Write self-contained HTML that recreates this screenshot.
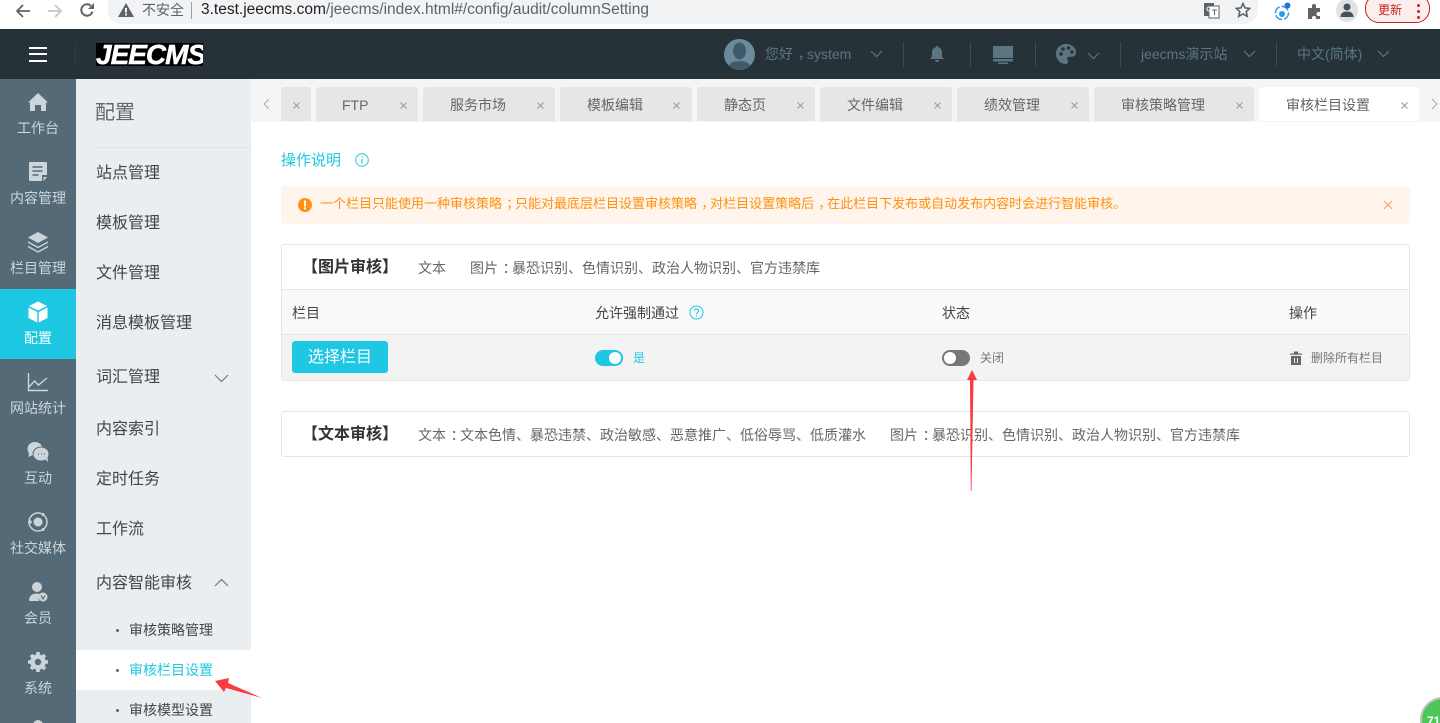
<!DOCTYPE html>
<html lang="zh">
<head>
<meta charset="utf-8">
<title>审核栏目设置</title>
<style>
html,body{margin:0;padding:0;background:#fff;width:1440px;height:723px;overflow:hidden}
body{font-family:"Liberation Sans","Noto Sans CJK SC",sans-serif;color:#333}
#root{position:absolute;left:0;top:0;width:1440px;height:723px;overflow:hidden;background:#fff}
#root div,#root span,#root svg{position:absolute;display:block}
i.p{font-style:normal;position:relative;left:.33em;top:0}
.t{white-space:nowrap;line-height:20px}
.tab{top:87px;height:34px;background:#e6e6e6;border-radius:3px 3px 0 0}
.tl{top:95px;font-size:14px;color:#666}
.x{top:101px;width:9px;height:9px}
.nl{left:0;width:76px;text-align:center;font-size:14px;color:#ccd5d9}
.sm{left:96px;font-size:16px;color:#444}
.sub{left:129px;font-size:14px;color:#444}
.dot{left:116px;width:3px;height:3px;border-radius:50%;background:#666}
.c{fill:#ccd5d9}
.h{font-size:14px;color:#5b7583}
.sep{top:42px;width:1px;height:25px;background:#3d4e57}
</style>
</head>
<body>
<div id="root">
<!-- browser bar -->
<div style="left:0;top:0;width:1440px;height:29px;background:#fff"></div>
<div style="left:108px;top:-4px;width:1150px;height:28px;background:#f1f3f4;border-radius:0 0 14px 14px"></div>
<svg style="left:14px;top:3px" width="18" height="16" viewBox="0 0 18 16"><path d="M16 8H3M9 2L3 8l6 6" fill="none" stroke="#5f6368" stroke-width="1.800"/></svg>
<svg style="left:46px;top:3px" width="18" height="16" viewBox="0 0 18 16"><path d="M2 8h13M9 2l6 6-6 6" fill="none" stroke="#c4c7ca" stroke-width="1.800"/></svg>
<svg style="left:79px;top:2px" width="16" height="16" viewBox="0 0 16 16"><path d="M13.500 9.500A5.700 5.700 0 1 1 11.800 3.700" fill="none" stroke="#5f6368" stroke-width="2"/><path d="M9 7h6V1z" fill="#5f6368"/></svg>
<svg style="left:118px;top:3px" width="16" height="14" viewBox="0 0 16 14"><path d="M8 0l8 14H0z" fill="#5f6368"/><rect x="7" y="5" width="2" height="4.500" fill="#f1f3f4"/><rect x="7" y="10.500" width="2" height="2" fill="#f1f3f4"/></svg>
<span class="t" style="left:142px;top:0;font-size:14px;color:#5f6368">不安全</span>
<div style="left:191px;top:2px;width:1px;height:17px;background:#9aa0a6"></div>
<span class="t" style="left:201px;top:0;font-size:15.500px;color:#5f6368"><i style="font-style:normal;color:#202124">3.test.jeecms.com</i>/jeecms/index.html#/config/audit/columnSetting</span>
<svg style="left:1203px;top:2px" width="17" height="17" viewBox="0 0 17 17"><rect x="1" y="1" width="10" height="13" fill="#5f6368"/><rect x="6" y="4" width="10" height="12" fill="#fff" stroke="#5f6368"/><circle cx="6" cy="7" r="2" fill="none" stroke="#fff"/><path d="M9 8h5M11.500 8v5" stroke="#5f6368"/></svg>
<svg style="left:1235px;top:2px" width="16" height="16" viewBox="0 0 16 16"><path d="M8 1.500l2 4.400 4.700.5-3.500 3.200 1 4.700L8 11.900l-4.200 2.400 1-4.700L1.300 6.400 6 5.900z" fill="none" stroke="#5f6368" stroke-width="1.600"/></svg>
<svg style="left:1274px;top:2px" width="18" height="20" viewBox="0 0 18 20"><circle cx="8" cy="11" r="6.500" fill="none" stroke="#2f97e8" stroke-width="1.500" stroke-dasharray="8 2"/><circle cx="8" cy="12" r="3" fill="#2f97e8"/><circle cx="13.500" cy="3.500" r="3" fill="#1a73e8"/></svg>
<svg style="left:1307px;top:3px" width="16" height="16" viewBox="0 0 16 16"><path d="M1 5h4V3a2 2 0 0 1 4 0v2h4v4h-1.500a2 2 0 0 0 0 4H13v3H9v-1a2 2 0 0 0-4 0v1H1z" fill="#5f6368"/></svg>
<div style="left:1336px;top:-1px;width:22px;height:23px;border-radius:50%;background:#dfe1e5"></div>
<svg style="left:1339px;top:2px" width="16" height="16" viewBox="0 0 16 16"><circle cx="8" cy="5" r="3.500" fill="#44505c"/><path d="M1.500 15c0-4 3-5.500 6.500-5.500s6.500 1.500 6.500 5.500z" fill="#44505c"/></svg>
<div style="left:1365px;top:-6px;width:65px;height:29px;box-sizing:border-box;border:1px solid #c5221f;border-radius:14px;background:#fdeeee"></div>
<span class="t" style="left:1378px;top:0;font-size:12px;color:#c5221f">更新</span>
<div style="left:1417px;top:4px;width:3px;height:3px;border-radius:50%;background:#c5221f"></div>
<div style="left:1417px;top:10px;width:3px;height:3px;border-radius:50%;background:#c5221f"></div>
<div style="left:1417px;top:16px;width:3px;height:3px;border-radius:50%;background:#c5221f"></div>

<!-- header -->
<div style="left:0;top:29px;width:1440px;height:50px;background:#263238"></div>
<div style="left:29px;top:47px;width:18px;height:2px;background:#fff"></div>
<div style="left:29px;top:53px;width:18px;height:2px;background:#fff"></div>
<div style="left:29px;top:60px;width:18px;height:2px;background:#fff"></div>
<div class="sep" style="left:75px;background:#2f3d45"></div>
<div style="left:96px;top:43px;width:107px;height:23px;background:#000"></div>
<span class="t" style="left:96px;top:43px;width:107px;height:23px;line-height:23px;font-size:28px;font-weight:bold;font-style:italic;color:#fff;letter-spacing:-1px;-webkit-text-stroke:.5px #fff;overflow:hidden">JEECMS</span>

<svg style="left:724px;top:39px" width="31" height="31" viewBox="0 0 31 31"><defs><clipPath id="av"><circle cx="15.500" cy="15.500" r="15.500"/></clipPath></defs><circle cx="15.500" cy="15.500" r="15.500" fill="#6c8a99"/><g clip-path="url(#av)"><ellipse cx="15.500" cy="12" rx="6.500" ry="8.500" fill="#3f5b69"/><path d="M3 31c1-7 7-9 12.500-9S27 24 28 31z" fill="#3f5b69"/></g></svg>
<span class="t h" style="left:765px;top:44px">您好<i class="p">，</i>system</span>
<svg style="left:870px;top:50px" width="13" height="8" viewBox="0 0 13 8"><path d="M1 1l5.500 5.500L12 1" fill="none" stroke="#5b7583" stroke-width="1.200"/></svg>
<div class="sep" style="left:903px"></div>
<svg style="left:929px;top:45px" width="16" height="18" viewBox="0 0 16 18"><path d="M8 1c.9 0 1.300.6 1.300 1.300C11.800 3 13 5 13 8v3.500l2 2.500H1l2-2.500V8c0-3 1.200-5 3.700-5.700C6.700 1.600 7.100 1 8 1zM6 15h4a2 2 0 0 1-4 0z" fill="#5b7583"/></svg>
<div class="sep" style="left:970px"></div>
<svg style="left:992px;top:45px" width="22" height="20" viewBox="0 0 22 20"><rect x="1" y="1" width="20" height="12" fill="#5b7583"/><rect x="1" y="14" width="20" height="2.500" fill="#5b7583"/><rect x="6" y="17.500" width="10" height="1.500" fill="#5b7583"/></svg>
<div class="sep" style="left:1035px"></div>
<svg style="left:1055px;top:43px" width="22" height="22" viewBox="0 0 22 22"><path d="M11 1C5 1 1 5.500 1 11s4.500 10 9.500 10c1.700 0 2.500-1 2.500-2.300 0-1.500-1-2-1-3.200 0-1.100 1-1.800 2.300-1.800H17c2.700 0 4-2 4-4.500C21 4.500 16.500 1 11 1z" fill="#5b7583"/><circle cx="6" cy="11" r="1.800" fill="#263238"/><circle cx="8" cy="6" r="1.800" fill="#263238"/><circle cx="13.500" cy="5" r="1.800" fill="#263238"/><circle cx="17" cy="9" r="1.800" fill="#263238"/></svg>
<svg style="left:1087px;top:52px" width="13" height="8" viewBox="0 0 13 8"><path d="M1 1l5.500 5.500L12 1" fill="none" stroke="#5b7583" stroke-width="1.200"/></svg>
<div class="sep" style="left:1120px"></div>
<span class="t h" style="left:1141px;top:44px">jeecms演示站</span>
<svg style="left:1243px;top:50px" width="13" height="8" viewBox="0 0 13 8"><path d="M1 1l5.500 5.500L12 1" fill="none" stroke="#5b7583" stroke-width="1.200"/></svg>
<div class="sep" style="left:1276px"></div>
<span class="t h" style="left:1297px;top:44px">中文(简体)</span>
<svg style="left:1377px;top:50px" width="13" height="8" viewBox="0 0 13 8"><path d="M1 1l5.500 5.500L12 1" fill="none" stroke="#5b7583" stroke-width="1.200"/></svg>

<!-- left nav -->
<div style="left:0;top:79px;width:76px;height:644px;background:#546b77"></div>
<div style="left:0;top:289px;width:76px;height:70px;background:#1ec8e2"></div>
<svg style="left:27px;top:92px" width="22" height="20" viewBox="0 0 22 20"><path class="c" d="M11 1l10 9.500h-2V19h-5v-6H8v6H3v-8.500H1z"/></svg>
<span class="t nl" style="top:118px">工作台</span>
<svg style="left:28px;top:161px" width="20" height="22" viewBox="0 0 20 22"><path class="c" d="M2 1h16a1 1 0 0 1 1 1v12h-5v6H2a1 1 0 0 1-1-1V2a1 1 0 0 1 1-1z"/><path d="M4.500 6h10M4.500 10h10M4.500 14h6" stroke="#546b77" stroke-width="1.600"/><path class="c" d="M15.500 16H19l-3.500 4z"/></svg>
<span class="t nl" style="top:188px">内容管理</span>
<svg style="left:27px;top:231px" width="22" height="22" viewBox="0 0 22 22"><path class="c" d="M11 1l10 5.500-10 5.500L1 6.500z"/><path d="M1 11l10 5.500L21 11M1 15.500L11 21l10-5.500" fill="none" stroke="#ccd5d9" stroke-width="1.300"/></svg>
<span class="t nl" style="top:258px">栏目管理</span>
<svg style="left:28px;top:301px" width="20" height="22" viewBox="0 0 20 22"><path d="M10 .5l9 4.500-9 4.500L1 5z" fill="#fff"/><path d="M.5 6.500l8.800 4.500v10.500L.5 17zM19.500 6.500L10.700 11v10.500L19.500 17z" fill="#fff"/></svg>
<span class="t nl" style="top:328px;color:#fff">配置</span>
<svg style="left:27px;top:373px" width="22" height="19" viewBox="0 0 22 19"><path d="M1.500 0v17.500H21" fill="none" stroke="#ccd5d9" stroke-width="1.400"/><path d="M2 14l5.500-6 4 4L20 5" fill="none" stroke="#ccd5d9" stroke-width="1.400"/></svg>
<span class="t nl" style="top:398px">网站统计</span>
<svg style="left:27px;top:441px" width="22" height="22" viewBox="0 0 22 22"><ellipse cx="8" cy="8" rx="7.500" ry="7" class="c"/><path class="c" d="M2 12l-.5 4 4-2z"/><ellipse cx="14" cy="13" rx="8" ry="7" fill="#ccd5d9" stroke="#546b77"/><path class="c" d="M18 18l3 3-.5-5z"/><path d="M11 13h1M14 13h1M17 13h1" stroke="#546b77" stroke-width="1.300"/></svg>
<span class="t nl" style="top:468px">互动</span>
<svg style="left:28px;top:511px" width="20" height="22" viewBox="0 0 20 22"><circle cx="10" cy="11" r="9" fill="none" stroke="#ccd5d9" stroke-width="1.500"/><circle cx="10" cy="11" r="4.500" class="c"/><circle cx="2" cy="11" r="1.800" class="c"/><circle cx="15" cy="3.500" r="1.500" class="c"/><circle cx="15" cy="18.500" r="1.500" class="c"/></svg>
<span class="t nl" style="top:538px">社交媒体</span>
<svg style="left:28px;top:581px" width="20" height="22" viewBox="0 0 20 22"><circle cx="9" cy="6" r="5" class="c"/><path class="c" d="M1 20c0-5 3-7.500 8-7.500 1 0 2 .1 2.800.4-1.500 1.500-1.800 5-.3 7.100H2a1 1 0 0 1-1-1z"/><circle cx="15" cy="16" r="4.500" class="c"/><path d="M13 14.500l2 3.500 2-3.500" fill="none" stroke="#546b77" stroke-width="1.200"/></svg>
<span class="t nl" style="top:608px">会员</span>
<svg style="left:27px;top:651px" width="22" height="22" viewBox="0 0 22 22"><circle cx="11" cy="11" r="5.500" fill="none" stroke="#ccd5d9" stroke-width="4.500"/><path d="M11 1v4M11 17v4M1 11h4M17 11h4M4 4l3 3M15 15l3 3M18 4l-3 3M7 15l-3 3" stroke="#ccd5d9" stroke-width="3.600"/></svg>
<span class="t nl" style="top:678px">系统</span>
<div style="left:33px;top:720px;width:10px;height:10px;border-radius:50%;background:#ccd5d9"></div>

<!-- second nav -->
<div style="left:76px;top:79px;width:175px;height:644px;background:#ebeef1"></div>
<span class="t" style="left:95px;top:102px;font-size:20px;line-height:22px;color:#666">配置</span>
<div style="left:95px;top:147px;width:156px;height:1px;background:#e0e4e8"></div>
<span class="t sm" style="top:164px">站点管理</span>
<span class="t sm" style="top:214px">模板管理</span>
<span class="t sm" style="top:264px">文件管理</span>
<span class="t sm" style="top:314px">消息模板管理</span>
<span class="t sm" style="top:368px">词汇管理</span>
<svg style="left:214px;top:374px" width="15" height="9" viewBox="0 0 15 9"><path d="M1 1l6.500 6.500L14 1" fill="none" stroke="#777" stroke-width="1.200"/></svg>
<span class="t sm" style="top:420px">内容索引</span>
<span class="t sm" style="top:470px">定时任务</span>
<span class="t sm" style="top:520px">工作流</span>
<span class="t sm" style="top:574px">内容智能审核</span>
<svg style="left:214px;top:578px" width="15" height="9" viewBox="0 0 15 9"><path d="M1 8l6.500-6.500L14 8" fill="none" stroke="#777" stroke-width="1.200"/></svg>
<div style="left:76px;top:650px;width:175px;height:40px;background:#fff"></div>
<div class="dot" style="top:629px"></div>
<span class="t sub" style="top:620px">审核策略管理</span>
<div class="dot" style="top:669px"></div>
<span class="t sub" style="top:660px;color:#1ec8e2">审核栏目设置</span>
<div class="dot" style="top:709px"></div>
<span class="t sub" style="top:700px">审核模型设置</span>

<!-- tabs -->
<div style="left:251px;top:79px;width:1189px;height:43px;background:#f5f5f5"></div>
<svg style="left:263px;top:98px" width="7" height="12" viewBox="0 0 7 12"><path d="M6 1L1 6l5 5" fill="none" stroke="#aaa"/></svg>
<svg style="left:1431px;top:98px" width="7" height="12" viewBox="0 0 7 12"><path d="M1 1l5 5-5 5" fill="none" stroke="#aaa"/></svg>
<div class="tab" style="left:281px;width:30px"></div>
<div class="tab" style="left:316px;width:102px"></div>
<div class="tab" style="left:423px;width:132px"></div>
<div class="tab" style="left:560px;width:132px"></div>
<div class="tab" style="left:697px;width:118px"></div>
<div class="tab" style="left:820px;width:132px"></div>
<div class="tab" style="left:957px;width:132px"></div>
<div class="tab" style="left:1094px;width:160px"></div>
<div class="tab" style="left:1259px;width:160px;background:#fff"></div>
<span class="t tl" style="left:342px">FTP</span>
<span class="t tl" style="left:450px">服务市场</span>
<span class="t tl" style="left:587px">模板编辑</span>
<span class="t tl" style="left:724px">静态页</span>
<span class="t tl" style="left:847px">文件编辑</span>
<span class="t tl" style="left:984px">绩效管理</span>
<span class="t tl" style="left:1121px">审核策略管理</span>
<span class="t tl" style="left:1286px">审核栏目设置</span>
<svg class="x" style="left:291.500px" viewBox="0 0 9 9"><path d="M1.500 1.500l6 6M7.500 1.500l-6 6" stroke="#999"/></svg>
<svg class="x" style="left:398.500px" viewBox="0 0 9 9"><path d="M1.500 1.500l6 6M7.500 1.500l-6 6" stroke="#999"/></svg>
<svg class="x" style="left:535.500px" viewBox="0 0 9 9"><path d="M1.500 1.500l6 6M7.500 1.500l-6 6" stroke="#999"/></svg>
<svg class="x" style="left:671.500px" viewBox="0 0 9 9"><path d="M1.500 1.500l6 6M7.500 1.500l-6 6" stroke="#999"/></svg>
<svg class="x" style="left:795.500px" viewBox="0 0 9 9"><path d="M1.500 1.500l6 6M7.500 1.500l-6 6" stroke="#999"/></svg>
<svg class="x" style="left:932.500px" viewBox="0 0 9 9"><path d="M1.500 1.500l6 6M7.500 1.500l-6 6" stroke="#999"/></svg>
<svg class="x" style="left:1069.500px" viewBox="0 0 9 9"><path d="M1.500 1.500l6 6M7.500 1.500l-6 6" stroke="#999"/></svg>
<svg class="x" style="left:1234.500px" viewBox="0 0 9 9"><path d="M1.500 1.500l6 6M7.500 1.500l-6 6" stroke="#999"/></svg>
<svg class="x" style="left:1399.500px" viewBox="0 0 9 9"><path d="M1.500 1.500l6 6M7.500 1.500l-6 6" stroke="#999"/></svg>

<!-- content -->
<span class="t" style="left:281px;top:151px;font-size:15px;color:#1ec8e2">操作说明</span>
<svg style="left:355px;top:153px" width="14" height="14" viewBox="0 0 14 14"><circle cx="7" cy="7" r="6.300" fill="none" stroke="#1ec8e2"/><path d="M7.500 3.500v1M7.200 6l-.7 4.500" stroke="#1ec8e2" stroke-width="1.100"/></svg>

<div style="left:281px;top:186px;width:1129px;height:38px;background:#fff5ec;border-radius:3px"></div>
<svg style="left:297px;top:197px" width="16" height="16" viewBox="0 0 16 16"><circle cx="8" cy="8" r="7" fill="#ff9112"/><rect x="7" y="3.500" width="2" height="6" fill="#fff"/><rect x="7" y="10.500" width="2" height="2" fill="#fff"/></svg>
<span class="t" style="left:320px;top:194px;font-size:13px;color:#ff9112">一个栏目只能使用一种审核策略<i class="p">；</i>只能对最底层栏目设置审核策略<i class="p">，</i>对栏目设置策略后<i class="p">，</i>在此栏目下发布或自动发布内容时会进行智能审核。</span>
<svg style="left:1383px;top:200px" width="10" height="10" viewBox="0 0 10 10"><path d="M1 1l8 8M9 1L1 9" stroke="#ff9f5a" stroke-width="1.100"/></svg>

<div style="left:281px;top:244px;width:1129px;height:137px;box-sizing:border-box;border:1px solid #e6e6e6;border-radius:3px;overflow:hidden;background:#fff">
  <div style="left:0;top:44px;width:1127px;height:1px;background:#e6e6e6"></div>
  <div style="left:0;top:45px;width:1127px;height:44px;background:#f9f9f9"></div>
  <div style="left:0;top:89px;width:1127px;height:1px;background:#e6e6e6"></div>
  <div style="left:0;top:90px;width:1127px;height:45px;background:#f3f3f3"></div>
</div>
<span class="t" style="left:302px;top:258px;font-size:16px;font-weight:bold;color:#333">【图片审核】</span>
<span class="t" style="left:418px;top:258px;font-size:14px;color:#666">文本</span>
<span class="t" style="left:470px;top:258px;font-size:14px;color:#666">图片<i class="p">：</i>暴恐识别、色情识别、政治人物识别、官方违禁库</span>
<span class="t" style="left:292px;top:303px;font-size:14px;color:#444">栏目</span>
<span class="t" style="left:595px;top:303px;font-size:14px;color:#444">允许强制通过</span>
<svg style="left:689px;top:305px" width="15" height="15" viewBox="0 0 15 15"><circle cx="7.500" cy="7.500" r="6.500" fill="none" stroke="#1ec8e2"/><path d="M5.500 5.800c0-2.600 4-2.600 4 0 0 1.700-2 1.600-2 3.400M7.500 10.500v1.200" fill="none" stroke="#1ec8e2"/></svg>
<span class="t" style="left:942px;top:303px;font-size:14px;color:#444">状态</span>
<span class="t" style="left:1289px;top:303px;font-size:14px;color:#444">操作</span>

<div style="left:292px;top:341px;width:96px;height:32px;background:#1ec8e2;border-radius:3px"></div>
<span class="t" style="left:292px;top:348px;width:96px;text-align:center;font-size:16px;color:#fff">选择栏目</span>
<div style="left:595px;top:350px;width:28px;height:16px;border-radius:8px;background:#1ec8e2"></div>
<div style="left:609px;top:352px;width:12px;height:12px;border-radius:50%;background:#fff"></div>
<span class="t" style="left:633px;top:348px;font-size:12px;color:#1ec8e2">是</span>
<div style="left:942px;top:350px;width:28px;height:16px;border-radius:8px;background:#777"></div>
<div style="left:944px;top:352px;width:12px;height:12px;border-radius:50%;background:#fff"></div>
<span class="t" style="left:980px;top:348px;font-size:12px;color:#777">关闭</span>
<svg style="left:1290px;top:351px" width="12" height="14" viewBox="0 0 12 14"><path d="M0 2.500h12v1.300H0zM4 .5h4v2H4zM1 5h10v9H1z" fill="#666"/><path d="M4.500 7v5M7.500 7v5" stroke="#f3f3f3"/></svg>
<span class="t" style="left:1311px;top:348px;font-size:12px;color:#777">删除所有栏目</span>

<div style="left:281px;top:411px;width:1129px;height:46px;box-sizing:border-box;border:1px solid #e6e6e6;border-radius:3px;background:#fff"></div>
<span class="t" style="left:302px;top:425px;font-size:16px;font-weight:bold;color:#333">【文本审核】</span>
<span class="t" style="left:418px;top:425px;font-size:14px;color:#666">文本<i class="p">：</i>文本色情、暴恐违禁、政治敏感、恶意推广、低俗辱骂、低质灌水</span>
<span class="t" style="left:890px;top:425px;font-size:14px;color:#666">图片<i class="p">：</i>暴恐识别、色情识别、政治人物识别、官方违禁库</span>

<!-- annotation arrows -->
<svg style="left:0;top:0" width="1440" height="723" viewBox="0 0 1440 723">
  <path d="M972 370L977 380 973.500 380 971.500 491 970.800 491 970 380 967 380z" fill="#fb3b3f"/>
  <path d="M215 681L229 678 228 683 262 698 226 688 224 692z" fill="#fb3b3f"/>
</svg>

<!-- badge -->
<div style="left:1420px;top:697px;width:46px;height:46px;box-sizing:border-box;border:2px solid #bfbfbf;border-radius:50%;background:#4cc75a"></div>
<span class="t" style="left:1427px;top:711px;font-size:12px;font-weight:bold;color:#fff">71</span>
</div>
</body>
</html>
